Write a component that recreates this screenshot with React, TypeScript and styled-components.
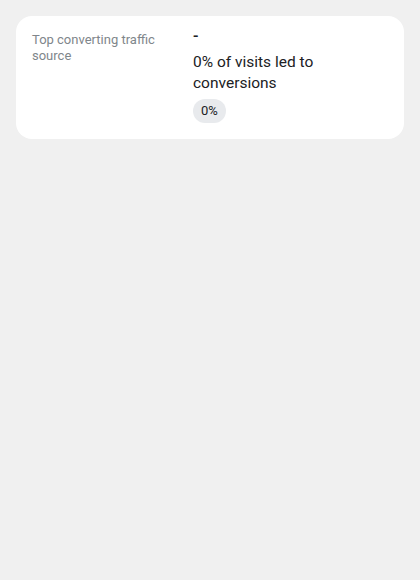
import React from "react";
import styled, { createGlobalStyle } from "styled-components";

const Global = createGlobalStyle`
  html, body { margin: 0; padding: 0; background: #f0f0f0; }
  body { font-family: Roboto, "Noto Sans", sans-serif; }
`;

const Page = styled.div`
  padding: 16px;
`;

const Card = styled.div`
  background: #ffffff;
  border-radius: 16px;
  padding: 16px;
  display: grid;
  grid-template-columns: 161px 1fr;
`;

const Label = styled.div`
  font-size: 13px;
  line-height: 16px;
  color: #80868b;
  padding-right: 16px;
`;

const Values = styled.div`
  display: flex;
  flex-direction: column;
  align-items: flex-start;
  color: #202124;
`;

const Dash = styled.div`
  font-size: 16px;
  line-height: 7px;
  height: 7px;
  font-weight: 500;
`;

const Desc = styled.div`
  font-size: 15.5px;
  line-height: 21px;
  margin-top: 13px;
  max-width: 140px;
`;

const Pill = styled.span`
  margin-top: 5px;
  height: 24px;
  padding: 0 8px;
  border-radius: 12px;
  background: #e8eaed;
  font-size: 13px;
  line-height: 24px;
  color: #202124;
`;

export default function App() {
  return (
    <>
      <Global />
      <Page>
        <Card>
          <Label>Top converting traffic source</Label>
          <Values>
            <Dash>-</Dash>
            <Desc>0% of visits led to conversions</Desc>
            <Pill>0%</Pill>
          </Values>
        </Card>
      </Page>
    </>
  );
}
